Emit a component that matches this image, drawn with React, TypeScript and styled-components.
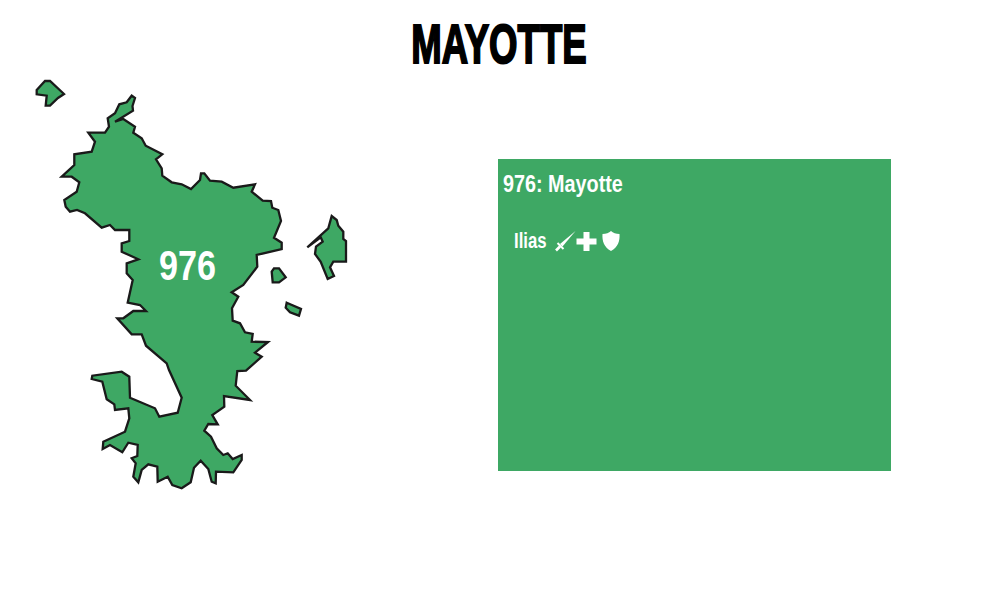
import styled, { createGlobalStyle } from "styled-components";

const GlobalStyle = createGlobalStyle`
  html, body {
    margin: 0;
    background: #fff;
  }
`;

const GREEN = "#3ea864";

// traced outlines of the island, in page pixels
const main =
  "115,121.7 133,110.7 132.5,106 135,98 131.7,95.7 126.7,102.3 119.3,104.3 115,113.3 107.7,118.3 109,126.7 105,132.7 88.3,132.7 95,141.7 91.7,151.7 74.3,154.3 74.3,165 61.7,176.7 71.7,176.7 79.3,182.3 76.7,191.7 64.3,200 65.7,206.7 70,211.7 77,210 85,213.3 101.7,227.7 110,225 115,230 129.3,230 129.3,241 121.7,243.3 121.7,251.7 138.3,259.3 126.7,263.3 126.7,273.3 132.7,280 127.7,302.7 140,305 146,311 133.3,311 123.3,318.3 117.3,318.3 131.7,334.3 141.7,334.3 146,345.7 166.7,363.3 169,370 181.7,397.7 177.7,412.7 159.3,416.7 155,408.3 130,397.7 129.3,376.7 121.7,371.7 92.3,375.7 91.7,379 102.3,381.7 106.7,399.3 114.3,404.3 115,410 128.3,408.3 129.3,418.3 125,431.7 103.3,441.7 102.7,449 110,445 122.3,452.3 128.3,442.7 137.7,445 137.3,456 131.7,458.3 135.7,463.3 133.3,476.7 138.3,482.3 141.7,470 148.3,464.3 157.3,466.7 157.7,481.7 167.7,476.7 172.3,485 181.7,488.3 190.7,482.3 194,467.7 200.7,460.7 208.3,469 211.7,481.7 215.7,483.3 216,471.7 233.3,472.3 241.7,460 241.7,455 232.7,459 227.7,453.3 223.3,455 216.7,448.3 211,436.7 204.3,430.7 208.3,424 217.7,424.3 212.3,415 224.3,406.7 224,396 250,400 235.7,385.7 237.3,371 246,370.7 261.7,356.7 255,352.7 268,342 251.7,341.7 252.7,334 245,332.3 240,323.3 232.7,320.7 232,308.3 238.3,296.7 231.7,292.3 243.3,285 257.3,266.7 256.7,255 281.7,249 281.7,242.7 274,237.7 281,221 278.3,210 272.3,207.7 271,201 262.7,200.7 251.7,191.7 255,184.3 233.3,187.7 221.7,181.7 210,180.7 204.3,173.3 201,173.3 200,180 191,189 181.7,184.3 171.7,182.3 162.3,175.7 161.7,168.3 156,159.3 162.3,154.3 145.7,145.7 141.7,138.3 133.3,132.7 135,126.7 123.3,119";

const islets = [
  "36.7,90 45,81 50,81 64,94 58,98 50,105.7 45.7,105.7 46.7,95.7 36.7,94.3",
  "307.3,247.3 328.3,228.3 331.7,216 336.7,220 338.3,225.7 343.3,231.7 343.3,239 346,241 346,261.7 333.3,261.7 330,267.3 334,276 327.7,279 320.7,261.7 315,254 316,246.7 322.7,241.7 320.7,237.3",
  "271.7,271.7 274,268.3 279,268.3 285.7,277.3 279,282.3 272.7,282.3",
  "286.7,302.7 301,309 299,315.7 290,312.3 285.7,307.7",
];

export default function App() {
  return (
    <Page>
      <GlobalStyle />
      <Title>
        <TitleText>MAYOTTE</TitleText>
      </Title>
      <Columns>
        <MapSvg viewBox="0 75 498 421">
          <Land points={main} />
          {islets.map((points) => (
            <Land key={points} points={points} />
          ))}
          <MapLabel x="187.5" y="280" textLength="57" lengthAdjust="spacingAndGlyphs">
            976
          </MapLabel>
        </MapSvg>
        <Panel>
          <PanelTitle>976: Mayotte</PanelTitle>
          <Member>
            <Name>Ilias</Name>
            <SwordIcon />
            <PlusIcon />
            <ShieldIcon />
          </Member>
        </Panel>
      </Columns>
    </Page>
  );
}

function SwordIcon() {
  return (
    <Icon width="21" height="21" viewBox="0 0 21 21">
      <path d="M20.5 0 L7.5 15.5 L5 13 Z" fill="#fff" />
      <path d="M2.5 12 L8.5 18 " stroke="#fff" strokeWidth="2" fill="none" />
      <path d="M5 15.5 L1 19.5" stroke="#fff" strokeWidth="2.6" fill="none" />
    </Icon>
  );
}

function PlusIcon() {
  return (
    <Icon width="21" height="21" viewBox="0 0 21 21">
      <path d="M7.5 1 H13.5 V7.5 H20.5 V13.5 H13.5 V20 H7.5 V13.5 H0.5 V7.5 H7.5 Z" fill="#fff" />
    </Icon>
  );
}

function ShieldIcon() {
  return (
    <ShieldSvg width="18" height="20" viewBox="0 0 18 20">
      <path d="M9 0 C11 2 14 3 17.5 3 C18 10 16 16 9 20 C2 16 0 10 0.5 3 C4 3 7 2 9 0 Z" fill="#fff" />
    </ShieldSvg>
  );
}

const Page = styled.div`
  width: 993px;
  height: 596px;
  overflow: hidden;
  background: #fff;
`;

const Title = styled.h1`
  margin: 0;
  height: 75px;
  padding-left: 5px;
  box-sizing: border-box;
  text-align: center;
  font-family: "Liberation Sans", sans-serif;
  font-size: 55px;
  line-height: 88px;
  font-weight: 700;
  color: #000;
`;

// no condensed display face is installed, so the bold sans is squeezed
const TitleText = styled.span`
  display: inline-block;
  transform: scaleX(0.665);
  -webkit-text-stroke: 2px #000;
`;

const Columns = styled.div`
  display: grid;
  grid-template-columns: 498px 393px;
`;

const MapSvg = styled.svg`
  display: block;
  width: 498px;
  height: 421px;
`;

const Land = styled.polygon`
  fill: ${GREEN};
  stroke: #1a1a1a;
  stroke-width: 2.3;
  stroke-linejoin: miter;
`;

const MapLabel = styled.text`
  font-family: "Liberation Sans", sans-serif;
  font-size: 43px;
  font-weight: 700;
  fill: #fff;
  text-anchor: middle;
`;

const Panel = styled.section`
  height: 312px;
  margin-top: 84px;
  padding: 13px 5px 0;
  box-sizing: border-box;
  background: ${GREEN};
  color: #fff;
  font-family: "Liberation Sans", sans-serif;
  font-weight: 700;
`;

const PanelTitle = styled.div`
  font-size: 23px;
  line-height: 25px;
  white-space: nowrap;
  transform: scaleX(0.86);
  transform-origin: left center;
`;

const Member = styled.div`
  display: flex;
  align-items: center;
  margin-top: 31px;
  padding-left: 11px;
  font-size: 22px;
  line-height: 26px;
`;

const Name = styled.span`
  flex: 0 0 35px;
  min-width: 0;
  white-space: nowrap;
  transform: scaleX(0.76);
  transform-origin: left center;
`;

const Icon = styled.svg`
  display: block;
  margin-left: 6px;

  & + & {
    margin-left: 0;
  }
`;

const ShieldSvg = styled.svg`
  display: block;
  margin-left: 5px;
`;
